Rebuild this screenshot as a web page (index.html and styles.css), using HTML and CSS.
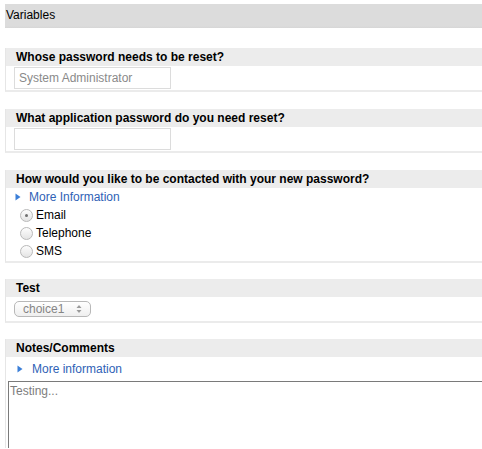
FILE: index.html
```html
<!DOCTYPE html>
<html>
<head>
<meta charset="utf-8">
<title>Variables</title>
<link rel="stylesheet" href="styles.css">
</head>
<body>
<div class="page">
  <div class="title">Variables</div>

  <div class="section">
    <div class="section-head">Whose password needs to be reset?</div>
    <div class="section-body">
      <input class="text-input" type="text" placeholder="System Administrator">
    </div>
  </div>

  <div class="section">
    <div class="section-head">What application password do you need reset?</div>
    <div class="section-body">
      <input class="text-input" type="text">
    </div>
  </div>

  <div class="section tight">
    <div class="section-head">How would you like to be contacted with your new password?</div>
    <div class="section-body radios-body">
      <div class="more-link">
        <svg class="tri" width="6" height="8" viewBox="0 0 6 8"><polygon points="0.5,0.5 5.5,4 0.5,7.5" fill="#3b7fd8"/></svg>
        <span>More Information</span>
      </div>
      <div class="radio-row"><span class="radio checked"></span><span>Email</span></div>
      <div class="radio-row"><span class="radio"></span><span>Telephone</span></div>
      <div class="radio-row"><span class="radio"></span><span>SMS</span></div>
    </div>
  </div>

  <div class="section tight">
    <div class="section-head">Test</div>
    <div class="section-body select-body">
      <div class="select">
        <span class="select-text">choice1</span>
        <svg class="select-arrows" width="6" height="10" viewBox="0 0 6 10"><polygon points="3,1 5.5,4 0.5,4" fill="#9a9a9a"/><polygon points="3,9 5.5,6 0.5,6" fill="#9a9a9a"/></svg>
      </div>
    </div>
  </div>

  <div class="section last">
    <div class="section-head">Notes/Comments</div>
    <div class="section-body notes-body">
      <div class="more-link notes-link">
        <svg class="tri" width="6" height="8" viewBox="0 0 6 8"><polygon points="0.5,0.5 5.5,4 0.5,7.5" fill="#3b7fd8"/></svg>
        <span>More information</span>
      </div>
      <textarea class="notes" placeholder="Testing..."></textarea>
    </div>
  </div>
</div>
</body>
</html>
```

FILE: styles.css
```css
html, body {
  margin: 0;
  padding: 0;
  background: #ffffff;
  overflow: hidden;
}
body {
  font-family: "Liberation Sans", Arial, Helvetica, sans-serif;
  font-size: 12px;
  color: #000;
}
.page {
  padding: 4px 0 0 5px;
}
.title {
  height: 24px;
  line-height: 23px;
  background: linear-gradient(#dcdcdc 0, #dcdcdc 22px, #d6d6d6 24px);
  padding-left: 1px;
  margin-bottom: 20px;
}
.section {
  border-left: 1px solid #e6e6e6;
  border-bottom: 2px solid #ebebeb;
  margin-bottom: 17px;
}
.section.tight {
  margin-bottom: 16px;
}
.section.last {
  border-bottom: none;
  margin-bottom: 0;
}
.section-head {
  background: #ececec;
  height: 18px;
  line-height: 18px;
  padding-left: 10px;
  font-weight: bold;
  white-space: nowrap;
}
.section-body {
  padding: 1px 0 1px 8px;
}
.text-input {
  display: block;
  box-sizing: border-box;
  width: 157px;
  height: 22px;
  margin: 0;
  border: 1px solid #dcdcdc;
  padding: 0 4px;
  font-family: "Liberation Sans", Arial, sans-serif;
  font-size: 12px;
  color: #000;
  background: #fff;
  outline: none;
}
.text-input::placeholder {
  color: #8a8a8a;
}
.radios-body {
  padding: 0 0 1px 0;
}
.more-link {
  display: flex;
  align-items: center;
  height: 18px;
  padding-left: 9px;
  color: #2f62b6;
}
.more-link .tri {
  margin-right: 8px;
}
.radio-row {
  display: flex;
  align-items: center;
  height: 18px;
  padding-left: 14px;
}
.radio {
  box-sizing: border-box;
  width: 13px;
  height: 13px;
  border-radius: 50%;
  border: 1px solid #b9b9b9;
  background: linear-gradient(#fdfdfd, #e4e4e4);
  margin-right: 3px;
  display: flex;
  align-items: center;
  justify-content: center;
}
.radio.checked::after {
  content: "";
  width: 3px;
  height: 3px;
  border-radius: 50%;
  background: #6f6f6f;
}
.select-body {
  padding: 4px 0 4px 8px;
}
.select {
  box-sizing: border-box;
  width: 77px;
  height: 16px;
  border: 1px solid #b8b8b8;
  border-radius: 5px;
  background: linear-gradient(#ffffff, #efefef);
  display: flex;
  align-items: center;
  padding-left: 8px;
  color: #858585;
}
.select-text {
  flex: 1;
  line-height: 14px;
}
.select-arrows {
  margin-right: 8px;
}
.notes-body {
  padding: 3px 0 0 0;
}
.notes-link {
  padding-left: 11px;
}
.notes-link .tri {
  margin-right: 9px;
}
.notes {
  display: block;
  box-sizing: border-box;
  width: 490px;
  height: 67px;
  margin: 3px 0 0 2px;
  border: 1px solid #7a7a7a;
  border-right: none;
  border-bottom: none;
  padding: 2px 1px;
  resize: none;
  font-family: "Liberation Sans", Arial, sans-serif;
  font-size: 12px;
  outline: none;
}
.notes::placeholder {
  color: #7d7d7d;
}
```
